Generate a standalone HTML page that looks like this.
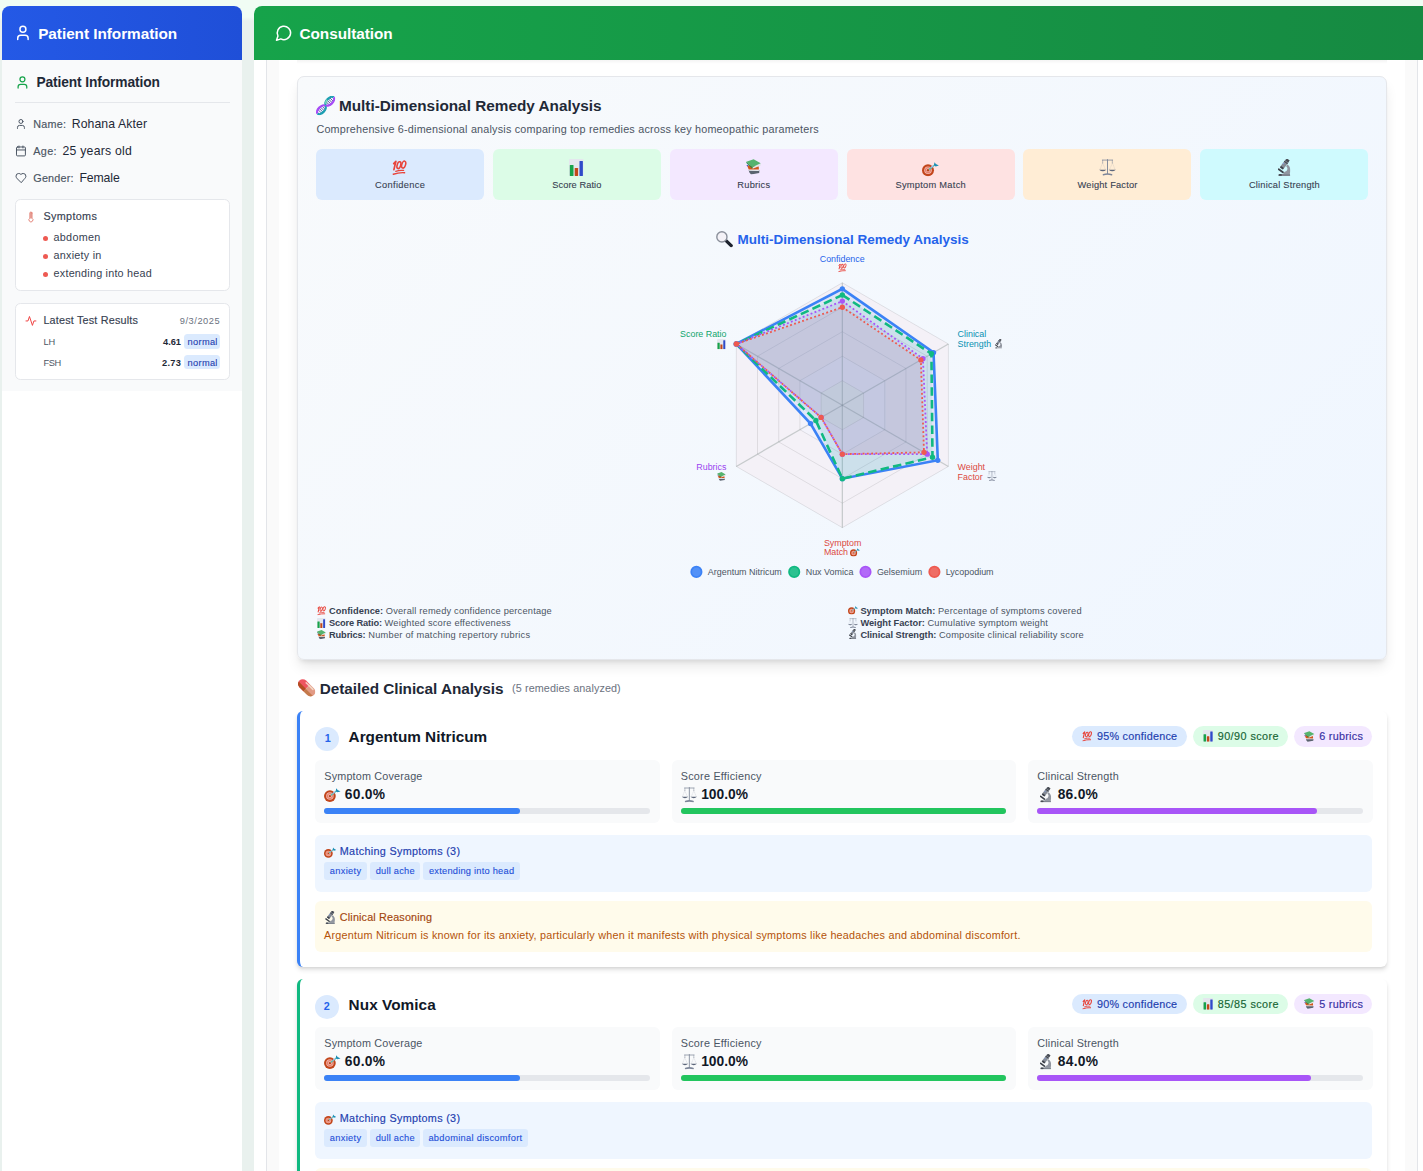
<!DOCTYPE html>
<html lang="en">
<head>
<meta charset="utf-8">
<title>Consultation</title>
<style>
*{box-sizing:border-box;margin:0;padding:0}
html,body{width:1423px;height:1171px;overflow:hidden}
body{font-family:"Liberation Sans",sans-serif;background:linear-gradient(180deg,#f0fdf4 0px,#f0fdf4 17px,#e9f1ee 21px);position:relative}
.abs{position:absolute}
.t{position:absolute;white-space:pre;line-height:1}
svg{overflow:visible}
</style>
</head>
<body>
<svg width="0" height="0" style="position:absolute"><defs>
<symbol id="e100" viewBox="0 0 15 15.2">
  <g fill="none" stroke="#e8453c" stroke-linecap="round" stroke-linejoin="round">
    <path d="M1.7 3.6 L3.9 1.3 L1.9 9.6" stroke-width="1.7"/>
    <ellipse cx="6.9" cy="5.2" rx="1.75" ry="3.5" transform="rotate(17 6.9 5.2)" stroke-width="1.55"/>
    <ellipse cx="11.7" cy="4.6" rx="1.85" ry="3.6" transform="rotate(17 11.7 4.6)" stroke-width="1.55"/>
    <path d="M3.7 11.4 Q7.6 10 11.6 10.5" stroke-width="1.25"/>
    <path d="M1.3 14.3 Q6.8 12.3 12.6 12.7" stroke-width="1.45"/>
  </g>
</symbol>
<symbol id="ebar" viewBox="0 0 14.7 17">
  <rect x="0" y="0" width="14.7" height="17" rx="0.8" fill="#e4e7ee"/>
  <rect x="0.8" y="6" width="3.7" height="10.9" rx="0.5" fill="#17a34a"/>
  <rect x="5.7" y="9" width="3.4" height="7.9" rx="0.4" fill="#c2481a"/>
  <rect x="10.5" y="2.1" width="3.4" height="14.8" rx="0.5" fill="#2f4bc9"/>
</symbol>
<symbol id="ebooks" viewBox="0 0 15 15.6">
  <polygon points="2.6,11.2 13.4,11.3 13.2,14 5,15.5 3.4,13.6" fill="#5a636f"/>
  <polygon points="2.8,10.2 12.9,10.5 12.9,11.9 3.1,11.7" fill="#e8ebef"/>
  <polygon points="1.0,6.2 12.7,7.3 12.9,10.6 2.7,10.4" fill="#d1571b"/>
  <polygon points="6.3,8.2 14.7,4.3 14.8,6.4 6.5,9.7" fill="#e1e5ea"/>
  <polygon points="0.3,2.7 7.6,0.2 14.7,4.2 6.3,8.3" fill="#55b36e"/>
  <polygon points="0.3,2.7 6.3,8.3 6.5,9.7 0.4,4.1" fill="#1f8a45"/>
  <circle cx="1.4" cy="6.6" r="0.8" fill="#4a55d0"/>
</symbol>
<symbol id="edart" viewBox="0 0 17 14.4">
  <circle cx="6" cy="8.2" r="6" fill="#c2461b"/>
  <circle cx="6" cy="8.2" r="3.8" fill="#f3b5aa"/>
  <circle cx="6" cy="8.2" r="2.6" fill="none" stroke="#dd5f48" stroke-width="0.7"/>
  <circle cx="6" cy="8.2" r="1.2" fill="#b8461b"/>
  <path d="M7.4 7.1 L12.7 3" stroke="#5cbfae" stroke-width="1.4" stroke-linecap="round"/>
  <path d="M9.3 5.2 L10.6 4.2" stroke="#a9b4f2" stroke-width="1.2" stroke-linecap="round"/>
  <polygon points="12.5,0.2 13.9,1.9 16.9,3.6 13.7,4.4 11.9,3.2" fill="#1d8fb6"/>
</symbol>
<symbol id="escale" viewBox="0 0 17 17">
  <g fill="none" stroke="#7d8699" stroke-linecap="round">
    <path d="M3.3 1.1 H13.7" stroke-width="0.8"/>
    <path d="M8.5 0.6 V15" stroke-width="0.95"/>
    <path d="M4.4 16 Q8.5 14.4 12.6 16" stroke-width="1.7"/>
    <path d="M3.6 1.3 V4" stroke-width="0.9" opacity="0.55"/>
    <path d="M13.4 1.3 V4" stroke-width="0.9" opacity="0.55"/>
    <path d="M3.5 4 L0.9 10.6 M3.5 4 L6.4 10.6 M13.5 4 L10.6 10.6 M13.5 4 L16.1 10.6" stroke-width="0.5" opacity="0.35" stroke-dasharray="0.8 1.2"/>
  </g>
  <path d="M0.1 10.8 H7.3 Q3.7 14 0.1 10.8 Z" fill="#5d677b"/>
  <path d="M9.7 10.8 H16.9 Q13.3 14 9.7 10.8 Z" fill="#5d677b"/>
</symbol>
<symbol id="emicro" viewBox="0 0 12.4 17">
  <path d="M9.2 5.6 C12.7 7.4 13 12.2 11.7 15.2 L5 15.2 C6 13.2 7 12.4 8.1 12.3 C9.9 11 9.9 8.7 8.2 7.2 Z" fill="#9196a0"/>
  <path d="M9.4 1.5 L3.5 9.2" stroke="#868c96" stroke-width="4"/>
  <path d="M10.3 0.4 L8.7 2.5" stroke="#474b53" stroke-width="3.5"/>
  <path d="M8.2 3.1 L7.6 3.9" stroke="#3d4149" stroke-width="4.3"/>
  <path d="M4.5 7.9 L3.3 9.5" stroke="#3d4149" stroke-width="3.4"/>
  <circle cx="5.6" cy="4.6" r="0.6" fill="#7ea0ee"/>
  <path d="M0.7 10.3 L4.9 13.3" stroke="#3e434b" stroke-width="1.9" stroke-linecap="round"/>
  <path d="M0.4 16.9 L0.8 15 H12 L12.3 16.9 Z" fill="#7f858f"/>
  <ellipse cx="2.3" cy="15.9" rx="1.7" ry="0.9" fill="#454a52"/>
</symbol>
<symbol id="edna" viewBox="0 0 19.4 19.2">
  <g transform="translate(5.45 13.75) rotate(-45)">
    <ellipse rx="5.2" ry="2.8" fill="#f6f6fd"/>
    <path d="M-2.4 -2 V2 M-0.6 -2.4 V2.4 M1.2 -2.4 V2.4 M3 -1.8 V1.8" stroke="#3f4390" stroke-width="0.75"/>
    <path d="M-5.4 0 A5.4 3 0 0 1 5.4 0" fill="none" stroke="#a64bf6" stroke-width="2.3"/>
    <path d="M-5.4 0 A5.4 3 0 0 0 5.4 0" fill="none" stroke="#1c9fb2" stroke-width="2.3"/>
  </g>
  <g transform="translate(13.8 5.2) rotate(-45)">
    <ellipse rx="5.2" ry="2.8" fill="#f6f6fd"/>
    <path d="M-3 -1.8 V1.8 M-1.2 -2.4 V2.4 M0.6 -2.4 V2.4 M2.4 -2 V2" stroke="#2f3380" stroke-width="0.75"/>
    <path d="M-5.4 0 A5.4 3 0 0 1 5.4 0" fill="none" stroke="#1c9fb2" stroke-width="2.3"/>
    <path d="M-5.4 0 A5.4 3 0 0 0 5.4 0" fill="none" stroke="#a64bf6" stroke-width="2.3"/>
    <path d="M-4.6 -1.2 A5.4 3 0 0 1 -1 -2.9" fill="none" stroke="#7fd6b4" stroke-width="1.6"/>
  </g>
</symbol>
<symbol id="emag" viewBox="0 0 17 16.4">
  <path d="M10 9.6 L15.2 14.6" stroke="#1e232e" stroke-width="3.3" stroke-linecap="round"/>
  <circle cx="5.9" cy="5.9" r="5.1" fill="#f4f2f7" stroke="#8b909b" stroke-width="1.4"/>
</symbol>
<symbol id="epill" viewBox="0 0 17.4 17.7">
  <g transform="translate(8.7 8.85) rotate(45)">
    <path d="M0 -4.7 H-5.6 A4.7 4.7 0 0 0 -5.6 4.7 H0 Z" fill="#ee5560"/>
    <path d="M0 -4.7 H5.6 A4.7 4.7 0 0 1 5.6 4.7 H0 Z" fill="#e29a84"/>
    <path d="M-5.6 4.7 A4.7 4.7 0 0 1 -10.1 1.2 H0 V4.7 Z" fill="#b44d22"/>
    <path d="M0 1.4 H9.9 A4.7 4.7 0 0 1 5.6 4.7 H0 Z" fill="#c47a4c"/>
    <path d="M-4 -3.3 H5.5" stroke="#f6e3d2" stroke-width="1.5" stroke-linecap="round" opacity="0.85"/>
  </g>
</symbol>
<symbol id="iuser" viewBox="0 0 24 24"><g fill="none" stroke="currentColor" stroke-width="2" stroke-linecap="round" stroke-linejoin="round"><path d="M19 21v-2a4 4 0 0 0-4-4H9a4 4 0 0 0-4 4v2"/><circle cx="12" cy="7" r="4"/></g></symbol>
<symbol id="ical" viewBox="0 0 24 24"><g fill="none" stroke="currentColor" stroke-width="2" stroke-linecap="round" stroke-linejoin="round"><path d="M8 2v4"/><path d="M16 2v4"/><rect width="18" height="18" x="3" y="4" rx="2"/><path d="M3 10h18"/></g></symbol>
<symbol id="iheart" viewBox="0 0 24 24"><g fill="none" stroke="currentColor" stroke-width="2" stroke-linecap="round" stroke-linejoin="round"><path d="M19 14c1.49-1.46 3-3.21 3-5.5A5.5 5.5 0 0 0 16.5 3c-1.76 0-3 .5-4.5 2-1.5-1.5-2.74-2-4.5-2A5.5 5.5 0 0 0 2 8.5c0 2.3 1.5 4.05 3 5.5l7 7Z"/></g></symbol>
<symbol id="itherm" viewBox="0 0 24 24"><rect x="9.4" y="2.6" width="5.2" height="12.4" rx="2.4" fill="#e9b3ab"/><g fill="none" stroke="#e27f73" stroke-width="1.9" stroke-linecap="round" stroke-linejoin="round"><path d="M14 4v10.54a4 4 0 1 1-4 0V4a2 2 0 0 1 4 0Z"/></g></symbol>
<symbol id="iact" viewBox="0 0 24 24"><g fill="none" stroke="currentColor" stroke-width="2" stroke-linecap="round" stroke-linejoin="round"><path d="M22 12h-4l-3 9L9 3l-3 9H2"/></g></symbol>
<symbol id="imsg" viewBox="0 0 24 24"><g fill="none" stroke="currentColor" stroke-width="2" stroke-linecap="round" stroke-linejoin="round"><path d="M7.9 20A9 9 0 1 0 4 16.1L2 22Z"/></g></symbol>
</defs></svg>
<div class="abs" style="left:2.00px;top:6.00px;width:240.00px;height:1200.00px;background:#fff;border-radius:0px;border-radius:8px 8px 0 0;"></div>
<div class="abs" style="left:2.00px;top:6.00px;width:240.00px;height:54.00px;background:linear-gradient(90deg,#2459e6,#1f4fd8);border-radius:0px;border-radius:8px 8px 0 0;"></div>
<div class="abs" style="left:2.00px;top:60.00px;width:240.00px;height:331.40px;background:#f9fafb;border-radius:0px;"></div>
<svg class="abs" style="left:13.90px;top:23.80px;color:#fff;" width="17.85" height="17.85"><use href="#iuser"/></svg>
<span class="t" style="left:38.20px;top:26.00px;font-size:15.32px;font-weight:700;letter-spacing:-0.034px;color:#fff;">Patient Information</span>
<svg class="abs" style="left:14.60px;top:75.40px;color:#16a34a;" width="14.88" height="14.88"><use href="#iuser"/></svg>
<span class="t" style="left:36.50px;top:76.00px;font-size:13.79px;font-weight:700;letter-spacing:-0.123px;color:#1f2937;">Patient Information</span>
<div class="abs" style="left:15.20px;top:102.00px;width:214.60px;height:1.00px;background:#e5e7eb;border-radius:0px;"></div>
<svg class="abs" style="left:14.90px;top:118.00px;color:#4b5563;" width="11.90" height="11.90"><use href="#iuser"/></svg>
<span class="t" style="left:33.30px;top:119.00px;font-size:10.81px;font-weight:400;letter-spacing:0.195px;color:#4b5563;-webkit-text-stroke:0.16px;">Name:</span>
<span class="t" style="left:71.70px;top:118.00px;font-size:12.26px;font-weight:400;letter-spacing:0.095px;color:#1f2937;">Rohana Akter</span>
<svg class="abs" style="left:14.70px;top:145.20px;color:#4b5563;" width="11.90" height="11.90"><use href="#ical"/></svg>
<span class="t" style="left:33.30px;top:146.00px;font-size:10.81px;font-weight:400;letter-spacing:0.339px;color:#4b5563;-webkit-text-stroke:0.16px;">Age:</span>
<span class="t" style="left:62.50px;top:145.00px;font-size:12.26px;font-weight:400;letter-spacing:0.240px;color:#1f2937;">25 years old</span>
<svg class="abs" style="left:15.00px;top:172.40px;color:#4b5563;" width="11.90" height="11.90"><use href="#iheart"/></svg>
<span class="t" style="left:33.30px;top:173.00px;font-size:10.81px;font-weight:400;letter-spacing:0.206px;color:#4b5563;-webkit-text-stroke:0.16px;">Gender:</span>
<span class="t" style="left:79.40px;top:172.00px;font-size:12.26px;font-weight:400;letter-spacing:-0.094px;color:#1f2937;">Female</span>
<div class="abs" style="left:15.00px;top:199.00px;width:215.00px;height:92.00px;background:#fff;border-radius:5.5px;border:1px solid #e5e7eb;"></div>
<svg class="abs" style="left:24.60px;top:210.60px;color:#ef4444;" width="11.90" height="11.90"><use href="#itherm"/></svg>
<span class="t" style="left:43.40px;top:211.00px;font-size:10.81px;font-weight:400;letter-spacing:0.348px;color:#374151;-webkit-text-stroke:0.16px;">Symptoms</span>
<div class="abs" style="left:42.95px;top:235.75px;width:5.10px;height:5.10px;background:#ee5a52;border-radius:3px;"></div>
<span class="t" style="left:53.60px;top:232.00px;font-size:10.81px;font-weight:400;letter-spacing:0.258px;color:#374151;">abdomen</span>
<div class="abs" style="left:42.95px;top:253.85px;width:5.10px;height:5.10px;background:#ee5a52;border-radius:3px;"></div>
<span class="t" style="left:53.60px;top:250.00px;font-size:10.81px;font-weight:400;letter-spacing:0.236px;color:#374151;">anxiety in</span>
<div class="abs" style="left:42.95px;top:271.95px;width:5.10px;height:5.10px;background:#ee5a52;border-radius:3px;"></div>
<span class="t" style="left:53.60px;top:268.00px;font-size:10.81px;font-weight:400;letter-spacing:0.215px;color:#374151;">extending into head</span>
<div class="abs" style="left:15.00px;top:303.00px;width:215.00px;height:77.00px;background:#fff;border-radius:5.5px;border:1px solid #e5e7eb;"></div>
<svg class="abs" style="left:24.60px;top:314.70px;color:#ef4444;" width="11.90" height="11.90"><use href="#iact"/></svg>
<span class="t" style="left:43.40px;top:315.00px;font-size:10.81px;font-weight:400;letter-spacing:0.194px;color:#374151;-webkit-text-stroke:0.16px;">Latest Test Results</span>
<span class="t" style="left:179.83px;top:317.00px;font-size:9.27px;font-weight:400;letter-spacing:0.527px;color:#6b7280;">9/3/2025</span>
<span class="t" style="left:43.40px;top:338.00px;font-size:9.27px;font-weight:400;letter-spacing:-0.078px;color:#4b5563;">LH</span>
<span class="t" style="left:163.12px;top:338.00px;font-size:9.27px;font-weight:700;letter-spacing:-0.057px;color:#1f2937;">4.61</span>
<div class="abs" style="left:183.90px;top:334.00px;width:36.10px;height:14.60px;background:#dbeafe;border-radius:3.5px;"></div>
<span class="t" style="left:187.60px;top:338.00px;font-size:9.27px;font-weight:400;letter-spacing:0.300px;color:#1e40af;-webkit-text-stroke:0.10px;">normal</span>
<span class="t" style="left:43.40px;top:359.00px;font-size:9.27px;font-weight:400;letter-spacing:-0.383px;color:#4b5563;">FSH</span>
<span class="t" style="left:161.95px;top:359.00px;font-size:9.27px;font-weight:700;letter-spacing:0.333px;color:#1f2937;">2.73</span>
<div class="abs" style="left:183.90px;top:354.70px;width:36.10px;height:14.60px;background:#dbeafe;border-radius:3.5px;"></div>
<span class="t" style="left:187.60px;top:359.00px;font-size:9.27px;font-weight:400;letter-spacing:0.300px;color:#1e40af;-webkit-text-stroke:0.10px;">normal</span>
<div class="abs" style="left:254.00px;top:6.00px;width:1200.00px;height:1200.00px;background:#fff;border-radius:0px;border-radius:8px 0 0 0;"></div>
<div class="abs" style="left:254.00px;top:6.00px;width:1169.00px;height:54.00px;background:linear-gradient(90deg,#16a34a 0%,#168a42 100%);border-radius:0px;border-radius:8px 0 0 0;"></div>
<svg class="abs" style="left:275.20px;top:23.80px;color:#fff;" width="17.85" height="17.85"><use href="#imsg"/></svg>
<span class="t" style="left:299.50px;top:26.00px;font-size:15.32px;font-weight:700;letter-spacing:-0.038px;color:#fff;">Consultation</span>
<div class="abs" style="left:266.20px;top:60.00px;width:1151.80px;height:1200.00px;background:#fafafa;border-radius:0px;border-left:1px solid #e3e5e9;border-right:1px solid #e3e5e9;"></div>
<div class="abs" style="left:278.50px;top:60.00px;width:1126.50px;height:1200.00px;background:#fff;border-radius:0px;"></div>
<div class="abs" style="left:297.00px;top:60.00px;width:1090.00px;height:4.00px;background:linear-gradient(180deg,rgba(0,0,0,0.045),rgba(0,0,0,0));border-radius:0px;"></div>
<div class="abs" style="left:297.20px;top:76.00px;width:1089.40px;height:584.00px;background:linear-gradient(135deg,#f8fafc 0%,#eff6ff 100%);border-radius:7px;border:0.85px solid #e5e7eb;box-shadow:0 8.5px 12.75px -2.5px rgba(0,0,0,.1),0 3.4px 5.1px -3.4px rgba(0,0,0,.1);"></div>
<svg class="abs" style="left:315.90px;top:95.80px;" width="19.40" height="19.20"><use href="#edna"/></svg>
<span class="t" style="left:338.90px;top:98.00px;font-size:15.32px;font-weight:700;letter-spacing:0.009px;color:#1f2937;">Multi-Dimensional Remedy Analysis</span>
<span class="t" style="left:316.40px;top:124.00px;font-size:10.81px;font-weight:400;letter-spacing:0.202px;color:#4b5563;">Comprehensive 6-dimensional analysis comparing top remedies across key homeopathic parameters</span>
<div class="abs" style="left:316.00px;top:149.00px;width:167.95px;height:51.00px;background:#dbeafe;border-radius:5.95px;"></div>
<svg class="abs" style="left:392.47px;top:160.00px;" width="15.00" height="15.20"><use href="#e100"/></svg>
<span class="t" style="left:375.02px;top:181.00px;font-size:9.27px;font-weight:400;letter-spacing:0.335px;color:#374151;-webkit-text-stroke:0.10px;">Confidence</span>
<div class="abs" style="left:492.87px;top:149.00px;width:167.95px;height:51.00px;background:#dcfce7;border-radius:5.95px;"></div>
<svg class="abs" style="left:569.49px;top:158.80px;" width="14.70" height="17.00"><use href="#ebar"/></svg>
<span class="t" style="left:552.29px;top:181.00px;font-size:9.27px;font-weight:400;letter-spacing:0.069px;color:#374151;-webkit-text-stroke:0.10px;">Score Ratio</span>
<div class="abs" style="left:669.74px;top:149.00px;width:167.95px;height:51.00px;background:#f3e8ff;border-radius:5.95px;"></div>
<svg class="abs" style="left:746.21px;top:159.30px;" width="15.00" height="15.60"><use href="#ebooks"/></svg>
<span class="t" style="left:737.36px;top:181.00px;font-size:9.27px;font-weight:400;letter-spacing:0.216px;color:#374151;-webkit-text-stroke:0.10px;">Rubrics</span>
<div class="abs" style="left:846.61px;top:149.00px;width:167.95px;height:51.00px;background:#fee2e2;border-radius:5.95px;"></div>
<svg class="abs" style="left:922.09px;top:161.70px;" width="17.00" height="14.40"><use href="#edart"/></svg>
<span class="t" style="left:895.45px;top:181.00px;font-size:9.27px;font-weight:400;letter-spacing:0.277px;color:#374151;-webkit-text-stroke:0.10px;">Symptom Match</span>
<div class="abs" style="left:1023.48px;top:149.00px;width:167.95px;height:51.00px;background:#ffedd5;border-radius:5.95px;"></div>
<svg class="abs" style="left:1098.96px;top:159.30px;" width="17.00" height="16.80"><use href="#escale"/></svg>
<span class="t" style="left:1077.51px;top:181.00px;font-size:9.27px;font-weight:400;letter-spacing:0.198px;color:#374151;-webkit-text-stroke:0.10px;">Weight Factor</span>
<div class="abs" style="left:1200.35px;top:149.00px;width:167.95px;height:51.00px;background:#cffafe;border-radius:5.95px;"></div>
<svg class="abs" style="left:1278.13px;top:159.00px;" width="12.40" height="17.00"><use href="#emicro"/></svg>
<span class="t" style="left:1248.91px;top:181.00px;font-size:9.27px;font-weight:400;letter-spacing:0.210px;color:#374151;-webkit-text-stroke:0.10px;">Clinical Strength</span>
<svg class="abs" style="left:660px;top:220px" width="380" height="380" viewBox="660 220 380 380"><polygon points="842.35,282.75 948.39,343.98 948.39,466.42 842.35,527.65 736.31,466.42 736.31,343.97" fill="#f4f1f7"/><polygon points="842.35,356.22 884.77,380.71 884.77,429.69 842.35,454.18 799.93,429.69 799.93,380.71" fill="#f3f3fb"/><polygon points="842.35,380.71 863.56,392.95 863.56,417.44 842.35,429.69 821.14,417.44 821.14,392.95" fill="#f0f5f3"/><polygon points="842.35,380.71 863.56,392.95 863.56,417.44 842.35,429.69 821.14,417.44 821.14,392.95" fill="none" stroke="rgba(0,0,0,0.11)" stroke-width="0.85"/><polygon points="842.35,356.22 884.77,380.71 884.77,429.69 842.35,454.18 799.93,429.69 799.93,380.71" fill="none" stroke="rgba(0,0,0,0.11)" stroke-width="0.85"/><polygon points="842.35,331.73 905.98,368.46 905.98,441.94 842.35,478.67 778.72,441.94 778.72,368.46" fill="none" stroke="rgba(0,0,0,0.11)" stroke-width="0.85"/><polygon points="842.35,307.24 927.19,356.22 927.19,454.18 842.35,503.16 757.51,454.18 757.51,356.22" fill="none" stroke="rgba(0,0,0,0.11)" stroke-width="0.85"/><polygon points="842.35,282.75 948.39,343.98 948.39,466.42 842.35,527.65 736.31,466.42 736.31,343.97" fill="none" stroke="rgba(0,0,0,0.11)" stroke-width="0.85"/><line x1="842.35" y1="405.2" x2="842.35" y2="282.75" stroke="rgba(110,128,124,0.34)" stroke-width="1.25"/><line x1="842.35" y1="405.2" x2="948.39" y2="343.98" stroke="rgba(110,128,124,0.34)" stroke-width="1.25"/><line x1="842.35" y1="405.2" x2="948.39" y2="466.42" stroke="rgba(110,128,124,0.34)" stroke-width="1.25"/><line x1="842.35" y1="405.2" x2="842.35" y2="527.65" stroke="rgba(110,128,124,0.34)" stroke-width="1.25"/><line x1="842.35" y1="405.2" x2="736.31" y2="466.42" stroke="rgba(110,128,124,0.34)" stroke-width="1.25"/><line x1="842.35" y1="405.2" x2="736.31" y2="343.97" stroke="rgba(110,128,124,0.34)" stroke-width="1.25"/><polygon points="842.35,307.24 920.82,359.89 924.00,452.34 842.35,454.18 821.14,417.44 736.31,343.97" fill="rgba(238,90,80,0.1)"/><polygon points="842.35,301.12 922.94,358.67 927.19,454.18 842.35,454.18 821.14,417.44 736.31,343.97" fill="rgba(168,85,247,0.1)"/><polygon points="842.35,295.00 931.43,353.77 932.49,457.24 842.35,478.67 815.84,420.51 736.31,343.97" fill="rgba(16,185,129,0.1)"/><polygon points="842.35,288.87 933.55,352.55 937.79,460.30 842.35,478.67 810.54,423.57 736.31,343.97" fill="rgba(59,130,246,0.1)"/><polygon points="842.35,288.87 933.55,352.55 937.79,460.30 842.35,478.67 810.54,423.57 736.31,343.97" fill="none" stroke="#3b82f6" stroke-width="2.6" stroke-linejoin="miter"/><circle cx="842.35" cy="288.87" r="2.65" fill="#3b82f6"/><circle cx="933.55" cy="352.55" r="2.65" fill="#3b82f6"/><circle cx="937.79" cy="460.30" r="2.65" fill="#3b82f6"/><circle cx="842.35" cy="478.67" r="2.65" fill="#3b82f6"/><circle cx="810.54" cy="423.57" r="2.65" fill="#3b82f6"/><circle cx="736.31" cy="343.97" r="2.65" fill="#3b82f6"/><polygon points="842.35,295.00 931.43,353.77 932.49,457.24 842.35,478.67 815.84,420.51 736.31,343.97" fill="none" stroke="#10b981" stroke-width="2.6" stroke-linejoin="miter" stroke-dasharray="8.5 4.25"/><circle cx="842.35" cy="295.00" r="2.65" fill="#10b981"/><circle cx="931.43" cy="353.77" r="2.65" fill="#10b981"/><circle cx="932.49" cy="457.24" r="2.65" fill="#10b981"/><circle cx="842.35" cy="478.67" r="2.65" fill="#10b981"/><circle cx="815.84" cy="420.51" r="2.65" fill="#10b981"/><circle cx="736.31" cy="343.97" r="2.65" fill="#10b981"/><polygon points="842.35,301.12 922.94,358.67 927.19,454.18 842.35,454.18 821.14,417.44 736.31,343.97" fill="none" stroke="#a855f7" stroke-width="1.8" stroke-linejoin="miter" stroke-dasharray="1.9 2.35"/><circle cx="842.35" cy="301.12" r="2.65" fill="#a855f7"/><circle cx="922.94" cy="358.67" r="2.65" fill="#a855f7"/><circle cx="927.19" cy="454.18" r="2.65" fill="#a855f7"/><circle cx="842.35" cy="454.18" r="2.65" fill="#a855f7"/><circle cx="821.14" cy="417.44" r="2.65" fill="#a855f7"/><circle cx="736.31" cy="343.97" r="2.65" fill="#a855f7"/><polygon points="842.35,307.24 920.82,359.89 924.00,452.34 842.35,454.18 821.14,417.44 736.31,343.97" fill="none" stroke="#ee5a50" stroke-width="1.8" stroke-linejoin="miter" stroke-dasharray="1.9 2.35"/><circle cx="842.35" cy="307.24" r="2.65" fill="#ee5a50"/><circle cx="920.82" cy="359.89" r="2.65" fill="#ee5a50"/><circle cx="924.00" cy="452.34" r="2.65" fill="#ee5a50"/><circle cx="842.35" cy="454.18" r="2.65" fill="#ee5a50"/><circle cx="821.14" cy="417.44" r="2.65" fill="#ee5a50"/><circle cx="736.31" cy="343.97" r="2.65" fill="#ee5a50"/><circle cx="696.4" cy="571.9" r="5.2" fill="rgba(59,130,246,0.88)" stroke="#3b82f6" stroke-width="1.7"/><circle cx="794.2" cy="571.9" r="5.2" fill="rgba(16,185,129,0.88)" stroke="#10b981" stroke-width="1.7"/><circle cx="865.5" cy="571.9" r="5.2" fill="rgba(168,85,247,0.88)" stroke="#a855f7" stroke-width="1.7"/><circle cx="934.4" cy="571.9" r="5.2" fill="rgba(238,90,80,0.88)" stroke="#ee5a50" stroke-width="1.7"/></svg>
<svg class="abs" style="left:716.10px;top:230.50px;" width="17.00" height="16.40"><use href="#emag"/></svg>
<span class="t" style="left:737.50px;top:233.00px;font-size:13.50px;font-weight:700;letter-spacing:0.000px;color:#2563eb;">Multi-Dimensional Remedy Analysis</span>
<span class="t" style="left:819.75px;top:255.00px;font-size:8.90px;font-weight:400;letter-spacing:0.000px;color:#2563eb;">Confidence</span>
<svg class="abs" style="left:838.10px;top:263.20px;" width="8.80" height="9.30"><use href="#e100"/></svg>
<span class="t" style="left:957.60px;top:330.00px;font-size:8.90px;font-weight:400;letter-spacing:0.000px;color:#0891b2;">Clinical</span>
<span class="t" style="left:957.60px;top:340.00px;font-size:8.90px;font-weight:400;letter-spacing:0.000px;color:#0891b2;">Strength</span>
<svg class="abs" style="left:995.30px;top:338.60px;" width="7.00" height="9.60"><use href="#emicro"/></svg>
<span class="t" style="left:957.60px;top:463.00px;font-size:8.90px;font-weight:400;letter-spacing:0.000px;color:#dc4a3e;">Weight</span>
<span class="t" style="left:957.60px;top:473.00px;font-size:8.90px;font-weight:400;letter-spacing:0.000px;color:#dc4a3e;">Factor</span>
<svg class="abs" style="left:987.20px;top:471.20px;" width="9.90" height="9.90"><use href="#escale"/></svg>
<span class="t" style="left:823.90px;top:539.00px;font-size:8.90px;font-weight:400;letter-spacing:0.000px;color:#dc4a3e;">Symptom</span>
<span class="t" style="left:823.90px;top:548.00px;font-size:8.90px;font-weight:400;letter-spacing:0.000px;color:#dc4a3e;">Match</span>
<svg class="abs" style="left:850.00px;top:547.80px;" width="10.10" height="8.60"><use href="#edart"/></svg>
<span class="t" style="left:696.31px;top:463.00px;font-size:8.90px;font-weight:400;letter-spacing:0.000px;color:#9b45f0;">Rubrics</span>
<svg class="abs" style="left:716.80px;top:471.60px;" width="9.00" height="8.90"><use href="#ebooks"/></svg>
<span class="t" style="left:680.12px;top:330.00px;font-size:8.90px;font-weight:400;letter-spacing:0.000px;color:#10a56c;">Score Ratio</span>
<svg class="abs" style="left:717.10px;top:338.60px;" width="8.80" height="10.30"><use href="#ebar"/></svg>
<span class="t" style="left:707.80px;top:568.00px;font-size:8.95px;font-weight:400;letter-spacing:0.000px;color:#4b5563;">Argentum Nitricum</span>
<span class="t" style="left:805.70px;top:568.00px;font-size:8.95px;font-weight:400;letter-spacing:0.000px;color:#4b5563;">Nux Vomica</span>
<span class="t" style="left:876.90px;top:568.00px;font-size:8.95px;font-weight:400;letter-spacing:0.000px;color:#4b5563;">Gelsemium</span>
<span class="t" style="left:945.70px;top:568.00px;font-size:8.95px;font-weight:400;letter-spacing:0.000px;color:#4b5563;">Lycopodium</span>
<svg class="abs" style="left:316.80px;top:605.95px;" width="9.20" height="9.30"><use href="#e100"/></svg>
<svg class="abs" style="left:317.10px;top:617.50px;" width="8.60" height="10.00"><use href="#ebar"/></svg>
<svg class="abs" style="left:316.90px;top:629.75px;" width="9.00" height="9.30"><use href="#ebooks"/></svg>
<svg class="abs" style="left:847.70px;top:606.30px;" width="10.20" height="8.60"><use href="#edart"/></svg>
<svg class="abs" style="left:847.80px;top:617.50px;" width="10.00" height="10.00"><use href="#escale"/></svg>
<svg class="abs" style="left:849.10px;top:629.40px;" width="7.40" height="10.00"><use href="#emicro"/></svg>
<span class="t" style="left:329.00px;top:607.00px;font-size:9.27px;font-weight:700;letter-spacing:0.064px;color:#374151;">Confidence:</span>
<span class="t" style="left:385.79px;top:607.00px;font-size:9.27px;font-weight:400;letter-spacing:0.195px;color:#4b5563;">Overall remedy confidence percentage</span>
<span class="t" style="left:329.00px;top:619.00px;font-size:9.27px;font-weight:700;letter-spacing:-0.143px;color:#374151;">Score Ratio:</span>
<span class="t" style="left:384.60px;top:619.00px;font-size:9.27px;font-weight:400;letter-spacing:0.201px;color:#4b5563;">Weighted score effectiveness</span>
<span class="t" style="left:329.00px;top:631.00px;font-size:9.27px;font-weight:700;letter-spacing:-0.127px;color:#374151;">Rubrics:</span>
<span class="t" style="left:368.30px;top:631.00px;font-size:9.27px;font-weight:400;letter-spacing:0.236px;color:#4b5563;">Number of matching repertory rubrics</span>
<span class="t" style="left:860.40px;top:607.00px;font-size:9.27px;font-weight:700;letter-spacing:0.026px;color:#374151;">Symptom Match:</span>
<span class="t" style="left:938.00px;top:607.00px;font-size:9.27px;font-weight:400;letter-spacing:0.192px;color:#4b5563;">Percentage of symptoms covered</span>
<span class="t" style="left:860.40px;top:619.00px;font-size:9.27px;font-weight:700;letter-spacing:-0.017px;color:#374151;">Weight Factor:</span>
<span class="t" style="left:927.47px;top:619.00px;font-size:9.27px;font-weight:400;letter-spacing:0.189px;color:#4b5563;">Cumulative symptom weight</span>
<span class="t" style="left:860.40px;top:631.00px;font-size:9.27px;font-weight:700;letter-spacing:-0.044px;color:#374151;">Clinical Strength:</span>
<span class="t" style="left:938.97px;top:631.00px;font-size:9.27px;font-weight:400;letter-spacing:0.178px;color:#4b5563;">Composite clinical reliability score</span>
<svg class="abs" style="left:297.60px;top:679.30px;" width="17.40" height="17.70"><use href="#epill"/></svg>
<span class="t" style="left:319.85px;top:681.00px;font-size:15.32px;font-weight:700;letter-spacing:-0.052px;color:#1f2937;">Detailed Clinical Analysis</span>
<span class="t" style="left:512.10px;top:683.00px;font-size:10.81px;font-weight:400;letter-spacing:0.089px;color:#6b7280;">(5 remedies analyzed)</span>
<div class="abs" style="left:297.00px;top:710.70px;width:1090.40px;height:256.10px;background:#fff;border-radius:6px;border-left:3.4px solid #3b82f6;box-shadow:0 3.4px 5.1px -0.85px rgba(0,0,0,.1),0 1.7px 3.4px -1.7px rgba(0,0,0,.1);"></div>
<div class="abs" style="left:315.00px;top:726.90px;width:24.00px;height:24.00px;background:#dbeafe;border-radius:12px;"></div>
<span class="t" style="left:324.73px;top:733.00px;font-size:10.81px;font-weight:700;letter-spacing:-1.484px;color:#2563eb;">1</span>
<span class="t" style="left:348.60px;top:729.00px;font-size:15.32px;font-weight:700;letter-spacing:-0.006px;color:#111827;">Argentum Nitricum</span>
<div class="abs" style="left:1071.90px;top:725.75px;width:114.70px;height:20.75px;background:#dbeafe;border-radius:10.4px;"></div>
<svg class="abs" style="left:1082.00px;top:730.90px;" width="10.30" height="10.40"><use href="#e100"/></svg>
<span class="t" style="left:1097.00px;top:731.00px;font-size:10.81px;font-weight:400;letter-spacing:0.250px;color:#1e40af;-webkit-text-stroke:0.16px;">95% confidence</span>
<div class="abs" style="left:1193.10px;top:725.75px;width:94.60px;height:20.75px;background:#dcfce7;border-radius:10.4px;"></div>
<svg class="abs" style="left:1203.00px;top:730.20px;" width="10.20" height="11.80"><use href="#ebar"/></svg>
<span class="t" style="left:1217.70px;top:731.00px;font-size:10.81px;font-weight:400;letter-spacing:0.448px;color:#166534;-webkit-text-stroke:0.16px;">90/90 score</span>
<div class="abs" style="left:1294.20px;top:725.75px;width:77.60px;height:20.75px;background:#f3e8ff;border-radius:10.4px;"></div>
<svg class="abs" style="left:1303.70px;top:730.65px;" width="10.60" height="10.90"><use href="#ebooks"/></svg>
<span class="t" style="left:1319.30px;top:731.00px;font-size:10.81px;font-weight:400;letter-spacing:0.262px;color:#3730a3;-webkit-text-stroke:0.16px;">6 rubrics</span>
<div class="abs" style="left:315.10px;top:760.00px;width:344.60px;height:62.60px;background:#f9fafb;border-radius:5.95px;"></div>
<span class="t" style="left:324.30px;top:771.00px;font-size:10.81px;font-weight:400;letter-spacing:0.175px;color:#4b5563;">Symptom Coverage</span>
<svg class="abs" style="left:324.00px;top:787.70px;" width="16.70" height="14.20"><use href="#edart"/></svg>
<span class="t" style="left:344.70px;top:788.00px;font-size:13.79px;font-weight:700;letter-spacing:0.313px;color:#111827;">60.0%</span>
<div class="abs" style="left:324.05px;top:808.00px;width:325.90px;height:5.95px;background:#e5e7eb;border-radius:3px;"></div>
<div class="abs" style="left:324.05px;top:808.00px;width:195.54px;height:5.95px;background:#3b82f6;border-radius:3px;"></div>
<div class="abs" style="left:671.60px;top:760.00px;width:344.60px;height:62.60px;background:#f9fafb;border-radius:5.95px;"></div>
<span class="t" style="left:680.80px;top:771.00px;font-size:10.81px;font-weight:400;letter-spacing:0.230px;color:#4b5563;">Score Efficiency</span>
<svg class="abs" style="left:680.50px;top:787.05px;" width="16.70" height="15.50"><use href="#escale"/></svg>
<span class="t" style="left:701.20px;top:788.00px;font-size:13.79px;font-weight:700;letter-spacing:0.019px;color:#111827;">100.0%</span>
<div class="abs" style="left:680.55px;top:808.00px;width:325.90px;height:5.95px;background:#e5e7eb;border-radius:3px;"></div>
<div class="abs" style="left:680.55px;top:808.00px;width:325.90px;height:5.95px;background:#22c55e;border-radius:3px;"></div>
<div class="abs" style="left:1028.10px;top:760.00px;width:344.60px;height:62.60px;background:#f9fafb;border-radius:5.95px;"></div>
<span class="t" style="left:1037.30px;top:771.00px;font-size:10.81px;font-weight:400;letter-spacing:0.171px;color:#4b5563;">Clinical Strength</span>
<svg class="abs" style="left:1039.75px;top:787.05px;" width="11.20" height="15.50"><use href="#emicro"/></svg>
<span class="t" style="left:1057.70px;top:788.00px;font-size:13.79px;font-weight:700;letter-spacing:0.263px;color:#111827;">86.0%</span>
<div class="abs" style="left:1037.05px;top:808.00px;width:325.90px;height:5.95px;background:#e5e7eb;border-radius:3px;"></div>
<div class="abs" style="left:1037.05px;top:808.00px;width:280.27px;height:5.95px;background:#a855f7;border-radius:3px;"></div>
<div class="abs" style="left:315.10px;top:835.00px;width:1057.40px;height:56.70px;background:#eff6ff;border-radius:5.95px;"></div>
<svg class="abs" style="left:324.10px;top:846.90px;" width="12.40" height="11.40"><use href="#edart"/></svg>
<span class="t" style="left:339.80px;top:846.00px;font-size:10.81px;font-weight:400;letter-spacing:0.311px;color:#1e40af;-webkit-text-stroke:0.16px;">Matching Symptoms (3)</span>
<div class="abs" style="left:323.90px;top:862.10px;width:43.00px;height:17.70px;background:#dbeafe;border-radius:3.2px;"></div>
<span class="t" style="left:329.63px;top:867.00px;font-size:9.27px;font-weight:400;letter-spacing:0.362px;color:#1d4ed8;-webkit-text-stroke:0.10px;">anxiety</span>
<div class="abs" style="left:370.20px;top:862.10px;width:49.80px;height:17.70px;background:#dbeafe;border-radius:3.2px;"></div>
<span class="t" style="left:375.64px;top:867.00px;font-size:9.27px;font-weight:400;letter-spacing:0.229px;color:#1d4ed8;-webkit-text-stroke:0.10px;">dull ache</span>
<div class="abs" style="left:423.00px;top:862.10px;width:97.00px;height:17.70px;background:#dbeafe;border-radius:3.2px;"></div>
<span class="t" style="left:428.94px;top:867.00px;font-size:9.27px;font-weight:400;letter-spacing:0.235px;color:#1d4ed8;-webkit-text-stroke:0.10px;">extending into head</span>
<div class="abs" style="left:315.10px;top:901.20px;width:1057.40px;height:50.40px;background:#fffbeb;border-radius:5.95px;"></div>
<svg class="abs" style="left:325.00px;top:910.90px;" width="10.30" height="13.10"><use href="#emicro"/></svg>
<span class="t" style="left:339.80px;top:912.00px;font-size:10.81px;font-weight:400;letter-spacing:0.163px;color:#a3460f;-webkit-text-stroke:0.16px;">Clinical Reasoning</span>
<span class="t" style="left:324.10px;top:930.00px;font-size:10.81px;font-weight:400;letter-spacing:0.222px;color:#b45309;">Argentum Nitricum is known for its anxiety, particularly when it manifests with physical symptoms like headaches and abdominal discomfort.</span>
<div class="abs" style="left:297.00px;top:978.50px;width:1090.40px;height:256.10px;background:#fff;border-radius:6px;border-left:3.4px solid #10b981;box-shadow:0 3.4px 5.1px -0.85px rgba(0,0,0,.1),0 1.7px 3.4px -1.7px rgba(0,0,0,.1);"></div>
<div class="abs" style="left:315.00px;top:994.70px;width:24.00px;height:24.00px;background:#dbeafe;border-radius:12px;"></div>
<span class="t" style="left:323.69px;top:1001.00px;font-size:10.81px;font-weight:700;letter-spacing:0.609px;color:#2563eb;">2</span>
<span class="t" style="left:348.60px;top:997.00px;font-size:15.32px;font-weight:700;letter-spacing:0.068px;color:#111827;">Nux Vomica</span>
<div class="abs" style="left:1071.90px;top:993.55px;width:114.70px;height:20.75px;background:#dbeafe;border-radius:10.4px;"></div>
<svg class="abs" style="left:1082.00px;top:998.70px;" width="10.30" height="10.40"><use href="#e100"/></svg>
<span class="t" style="left:1097.00px;top:999.00px;font-size:10.81px;font-weight:400;letter-spacing:0.250px;color:#1e40af;-webkit-text-stroke:0.16px;">90% confidence</span>
<div class="abs" style="left:1193.10px;top:993.55px;width:94.60px;height:20.75px;background:#dcfce7;border-radius:10.4px;"></div>
<svg class="abs" style="left:1203.00px;top:998.00px;" width="10.20" height="11.80"><use href="#ebar"/></svg>
<span class="t" style="left:1217.70px;top:999.00px;font-size:10.81px;font-weight:400;letter-spacing:0.448px;color:#166534;-webkit-text-stroke:0.16px;">85/85 score</span>
<div class="abs" style="left:1294.20px;top:993.55px;width:77.60px;height:20.75px;background:#f3e8ff;border-radius:10.4px;"></div>
<svg class="abs" style="left:1303.70px;top:998.45px;" width="10.60" height="10.90"><use href="#ebooks"/></svg>
<span class="t" style="left:1319.30px;top:999.00px;font-size:10.81px;font-weight:400;letter-spacing:0.262px;color:#3730a3;-webkit-text-stroke:0.16px;">5 rubrics</span>
<div class="abs" style="left:315.10px;top:1027.10px;width:344.60px;height:62.60px;background:#f9fafb;border-radius:5.95px;"></div>
<span class="t" style="left:324.30px;top:1038.00px;font-size:10.81px;font-weight:400;letter-spacing:0.175px;color:#4b5563;">Symptom Coverage</span>
<svg class="abs" style="left:324.00px;top:1054.80px;" width="16.70" height="14.20"><use href="#edart"/></svg>
<span class="t" style="left:344.70px;top:1055.00px;font-size:13.79px;font-weight:700;letter-spacing:0.313px;color:#111827;">60.0%</span>
<div class="abs" style="left:324.05px;top:1075.10px;width:325.90px;height:5.95px;background:#e5e7eb;border-radius:3px;"></div>
<div class="abs" style="left:324.05px;top:1075.10px;width:195.54px;height:5.95px;background:#3b82f6;border-radius:3px;"></div>
<div class="abs" style="left:671.60px;top:1027.10px;width:344.60px;height:62.60px;background:#f9fafb;border-radius:5.95px;"></div>
<span class="t" style="left:680.80px;top:1038.00px;font-size:10.81px;font-weight:400;letter-spacing:0.230px;color:#4b5563;">Score Efficiency</span>
<svg class="abs" style="left:680.50px;top:1054.15px;" width="16.70" height="15.50"><use href="#escale"/></svg>
<span class="t" style="left:701.20px;top:1055.00px;font-size:13.79px;font-weight:700;letter-spacing:0.019px;color:#111827;">100.0%</span>
<div class="abs" style="left:680.55px;top:1075.10px;width:325.90px;height:5.95px;background:#e5e7eb;border-radius:3px;"></div>
<div class="abs" style="left:680.55px;top:1075.10px;width:325.90px;height:5.95px;background:#22c55e;border-radius:3px;"></div>
<div class="abs" style="left:1028.10px;top:1027.10px;width:344.60px;height:62.60px;background:#f9fafb;border-radius:5.95px;"></div>
<span class="t" style="left:1037.30px;top:1038.00px;font-size:10.81px;font-weight:400;letter-spacing:0.171px;color:#4b5563;">Clinical Strength</span>
<svg class="abs" style="left:1039.75px;top:1054.15px;" width="11.20" height="15.50"><use href="#emicro"/></svg>
<span class="t" style="left:1057.70px;top:1055.00px;font-size:13.79px;font-weight:700;letter-spacing:0.338px;color:#111827;">84.0%</span>
<div class="abs" style="left:1037.05px;top:1075.10px;width:325.90px;height:5.95px;background:#e5e7eb;border-radius:3px;"></div>
<div class="abs" style="left:1037.05px;top:1075.10px;width:273.76px;height:5.95px;background:#a855f7;border-radius:3px;"></div>
<div class="abs" style="left:315.10px;top:1102.10px;width:1057.40px;height:56.70px;background:#eff6ff;border-radius:5.95px;"></div>
<svg class="abs" style="left:324.10px;top:1114.00px;" width="12.40" height="11.40"><use href="#edart"/></svg>
<span class="t" style="left:339.80px;top:1113.00px;font-size:10.81px;font-weight:400;letter-spacing:0.311px;color:#1e40af;-webkit-text-stroke:0.16px;">Matching Symptoms (3)</span>
<div class="abs" style="left:323.90px;top:1129.20px;width:43.00px;height:17.70px;background:#dbeafe;border-radius:3.2px;"></div>
<span class="t" style="left:329.63px;top:1134.00px;font-size:9.27px;font-weight:400;letter-spacing:0.362px;color:#1d4ed8;-webkit-text-stroke:0.10px;">anxiety</span>
<div class="abs" style="left:370.20px;top:1129.20px;width:49.80px;height:17.70px;background:#dbeafe;border-radius:3.2px;"></div>
<span class="t" style="left:375.64px;top:1134.00px;font-size:9.27px;font-weight:400;letter-spacing:0.229px;color:#1d4ed8;-webkit-text-stroke:0.10px;">dull ache</span>
<div class="abs" style="left:423.00px;top:1129.20px;width:104.50px;height:17.70px;background:#dbeafe;border-radius:3.2px;"></div>
<span class="t" style="left:428.38px;top:1134.00px;font-size:9.27px;font-weight:400;letter-spacing:0.299px;color:#1d4ed8;-webkit-text-stroke:0.10px;">abdominal discomfort</span>
<div class="abs" style="left:315.10px;top:1168.30px;width:1057.40px;height:50.40px;background:#fffbeb;border-radius:5.95px;"></div>
<svg class="abs" style="left:325.00px;top:1178.00px;" width="10.30" height="13.10"><use href="#emicro"/></svg>
<span class="t" style="left:339.80px;top:1179.00px;font-size:10.81px;font-weight:400;letter-spacing:0.163px;color:#a3460f;-webkit-text-stroke:0.16px;">Clinical Reasoning</span>
<span class="t" style="left:324.10px;top:1197.00px;font-size:10.81px;font-weight:400;letter-spacing:0.219px;color:#b45309;">Nux Vomica is indicated for irritability and digestive complaints with tension headaches from overwork and stress.</span>
</body>
</html>
